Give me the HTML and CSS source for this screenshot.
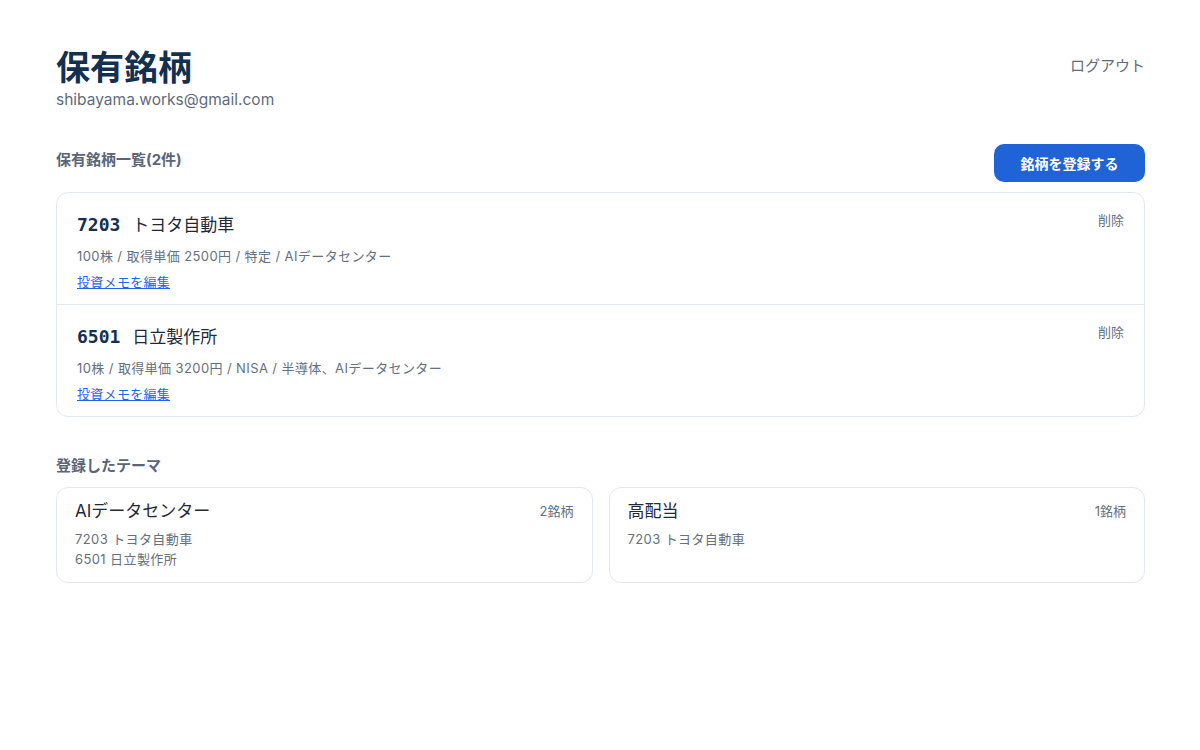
FILE: index.html
```html
<!DOCTYPE html>
<html lang="ja">
<head>
<meta charset="utf-8">
<title>保有銘柄</title>
<link rel="stylesheet" href="styles.css">
</head>
<body>
<main class="page">
  <header class="top">
    <div class="who">
      <h1 class="title">保有銘柄</h1>
      <div class="email">shibayama.works@gmail.com</div>
    </div>
    <a class="logout">ログアウト</a>
  </header>

  <section class="holdings">
    <div class="section-head">
      <h2 class="section-title">保有銘柄一覧(2件)</h2>
      <button class="primary">銘柄を登録する</button>
    </div>
    <div class="list">
      <div class="row">
        <div class="row-main">
          <div class="name-line"><span class="code">7203</span><span class="name">トヨタ自動車</span></div>
          <div class="meta">100株 / 取得単価 2500円 / 特定 / AIデータセンター</div>
          <a class="memo">投資メモを編集</a>
        </div>
        <a class="delete">削除</a>
      </div>
      <div class="row">
        <div class="row-main">
          <div class="name-line"><span class="code">6501</span><span class="name">日立製作所</span></div>
          <div class="meta">10株 / 取得単価 3200円 / NISA / 半導体、AIデータセンター</div>
          <a class="memo">投資メモを編集</a>
        </div>
        <a class="delete">削除</a>
      </div>
    </div>
  </section>

  <section class="themes">
    <h2 class="section-title themes-title">登録したテーマ</h2>
    <div class="theme-grid">
      <div class="theme">
        <div class="theme-head"><span class="theme-name">AIデータセンター</span><span class="theme-count">2銘柄</span></div>
        <ul class="theme-items">
          <li>7203 トヨタ自動車</li>
          <li>6501 日立製作所</li>
        </ul>
      </div>
      <div class="theme">
        <div class="theme-head"><span class="theme-name">高配当</span><span class="theme-count">1銘柄</span></div>
        <ul class="theme-items">
          <li>7203 トヨタ自動車</li>
        </ul>
      </div>
    </div>
  </section>
</main>
</body>
</html>
```

FILE: styles.css
```css
* { box-sizing: border-box; }
html, body { margin: 0; background: #ffffff; }
body {
  font-family: "Inter", "Noto Sans CJK JP", sans-serif;
  color: #1f2937;
}
.page {
  padding: 48px 55px 48px 56px;
}
.top {
  display: flex;
  justify-content: space-between;
  align-items: flex-start;
}
.title {
  margin: 0;
  font-size: 34px;
  line-height: 40px;
  font-weight: 700;
  color: #14304f;
}
.email {
  font-size: 15.5px;
  line-height: 24px;
  color: #5f6b7c;
}
.logout {
  margin-top: 6px;
  font-size: 15px;
  line-height: 24px;
  color: #5f6b7c;
  cursor: pointer;
}
.holdings { margin-top: 32px; }
.section-head {
  display: flex;
  justify-content: space-between;
  align-items: flex-start;
  margin-bottom: 10px;
}
.section-title {
  margin: 5px 0 0;
  font-size: 15px;
  line-height: 22px;
  font-weight: 700;
  color: #5a6677;
}
.primary {
  width: 151px;
  height: 38px;
  border: none;
  border-radius: 10px;
  background: #1f63d6;
  color: #ffffff;
  font-family: inherit;
  font-size: 14px;
  font-weight: 700;
  cursor: pointer;
}
.list {
  border: 1px solid #e2e8f0;
  border-radius: 12px;
}
.row {
  display: flex;
  justify-content: space-between;
  align-items: flex-start;
  padding: 18px 20px 13px;
  height: 111px;
}
.row + .row {
  border-top: 1px solid #e2e8f0;
  height: 112px;
}
.name-line {
  display: flex;
  align-items: baseline;
  gap: 12px;
  font-size: 17px;
  line-height: 27px;
}
.code {
  font-family: "DejaVu Sans Mono", monospace;
  font-weight: 700;
  font-size: 18px;
  color: #14304f;
}
.name { color: #1f2937; }
.meta {
  margin-top: 8px;
  font-size: 13px;
  line-height: 19px;
  letter-spacing: 0.4px;
  color: #64707f;
}
.memo {
  display: inline-block;
  margin-top: 7px;
  font-size: 13px;
  line-height: 19px;
  letter-spacing: 0.3px;
  color: #2563eb;
  text-decoration: underline;
  cursor: pointer;
}
.delete {
  font-size: 13px;
  line-height: 19px;
  color: #64707f;
  cursor: pointer;
}
.themes { margin-top: 38px; }
.themes-title { margin: 0 0 10px; }
.theme-grid {
  display: grid;
  grid-template-columns: 1fr 1fr;
  gap: 16px;
}
.theme {
  border: 1px solid #e2e8f0;
  border-radius: 12px;
  padding: 11px 18px 13px;
}
.theme-head {
  display: flex;
  justify-content: space-between;
  align-items: center;
  line-height: 24px;
}
.theme-name { font-size: 17px; color: #1f2937; }
.theme-count { font-size: 13px; color: #64707f; }
.theme-items {
  list-style: none;
  margin: 6px 0 0;
  padding: 0;
  font-size: 13px;
  line-height: 20px;
  letter-spacing: 0.4px;
  color: #64707f;
}
```
